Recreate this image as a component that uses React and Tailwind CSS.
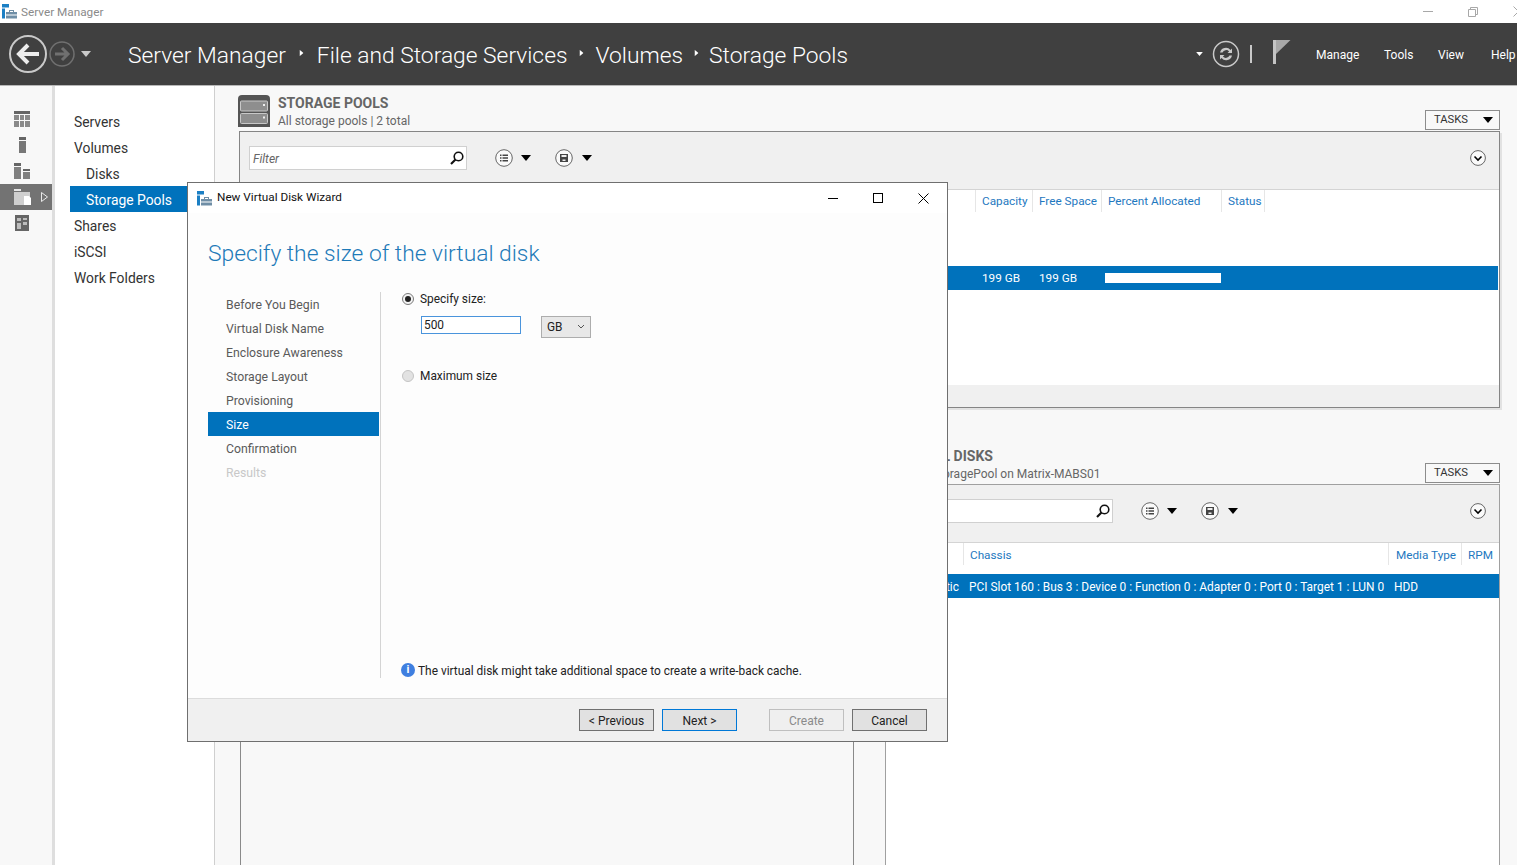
const Caret = ({ className = '', color = '#000', w = 10, h = 6 }) => (
  <svg width={w} height={h} viewBox="0 0 10 6" className={className}>
    <path d="M0 0h10L5 6z" fill={color} />
  </svg>
);

const AppIcon = () => (
  <svg width="15" height="15" viewBox="0 0 15 15" className="shrink-0">
    <rect x="0" y="0" width="7" height="3.5" fill="#1b7fc4" />
    <rect x="0" y="4.5" width="3" height="10" fill="#1b7fc4" />
    <path d="M4 8h11v6.5H4z" fill="#6f8ea6" />
    <path d="M7 8V6h5v2h-1V7H8v1z" fill="#6f8ea6" />
    <rect x="4" y="10.5" width="11" height="1" fill="#fff" />
  </svg>
);

const BackIcon = () => (
  <svg width="40" height="40" viewBox="0 0 40 40" className="shrink-0">
    <circle cx="20" cy="20" r="18" fill="none" stroke="#c9c9c9" strokeWidth="2" />
    <path d="M31 20H12M20 11l-9 9 9 9" fill="none" stroke="#ececec" strokeWidth="4" />
  </svg>
);

const ForwardIcon = () => (
  <svg width="26" height="26" viewBox="0 0 26 26" className="shrink-0">
    <circle cx="13" cy="13" r="12" fill="none" stroke="#707070" strokeWidth="1.5" />
    <path d="M6 13h13M13 7l6 6-6 6" fill="none" stroke="#707070" strokeWidth="3" />
  </svg>
);

const RefreshIcon = () => (
  <svg width="28" height="28" viewBox="0 0 28 28" className="shrink-0">
    <circle cx="14" cy="14" r="12.5" fill="none" stroke="#c9c9c9" strokeWidth="1.5" />
    <path d="M8 12.5a6 6 0 0 1 10.5-2.5l1.5-1.5V13h-4.5l1.6-1.6a4 4 0 0 0-6.6 1.1z" fill="#c9c9c9" />
    <path d="M20 15.5a6 6 0 0 1-10.5 2.5L8 19.500V15h4.500l-1.600 1.600a4 4 0 0 0 6.600-1.100z" fill="#c9c9c9" />
  </svg>
);

const FlagIcon = () => (
  <svg width="18" height="24" viewBox="0 0 18 24" className="shrink-0">
    <rect x="0" y="0" width="3" height="24" fill="#c4c4c4" />
    <path d="M3 0h14.500L3 14z" fill="#a8a8a8" />
  </svg>
);

const StorageIcon = () => (
  <svg width="32" height="32" viewBox="0 0 32 32" className="shrink-0 -ml-px">
    <path d="M4 0h24a4 4 0 0 1 4 4v28H0V4a4 4 0 0 1 4-4z" fill="#555" />
    <rect x="2.500" y="6" width="27" height="10" rx="1" fill="#8e8e8e" stroke="#c8c8c8" />
    <rect x="2.500" y="18.500" width="27" height="10" rx="1" fill="#8e8e8e" stroke="#c8c8c8" />
    <rect x="25" y="9" width="2" height="2" fill="#eee" />
    <rect x="25" y="21.500" width="2" height="2" fill="#eee" />
  </svg>
);

const DashIcon = () => (
  <svg width="16" height="16" viewBox="0 0 16 16">
    <path d="M0 0h16v3H0z" fill="#666" />
    <path d="M0 4h5v5H0zM6 4h4v5H6zM11 4h5v5h-5zM0 10h5v6H0zM6 10h4v6H6zM11 10h5v6h-5z" fill="#8a8a8a" />
  </svg>
);

const LocalIcon = () => (
  <svg width="16" height="16" viewBox="0 0 16 16">
    <path d="M5 0h7v3H5z" fill="#666" />
    <path d="M5 4h7v12H5z" fill="#777" />
  </svg>
);

const AllIcon = () => (
  <svg width="16" height="16" viewBox="0 0 16 16">
    <path d="M0 0h7v3H0zM9 6h7v2H9z" fill="#666" />
    <path d="M0 4h7v12H0zM9 9h7v7H9z" fill="#808080" />
  </svg>
);

const FilesIcon = () => (
  <svg width="18" height="16" viewBox="0 0 18 16">
    <path d="M0 0h7v2H0z" fill="#e6e6e6" />
    <path d="M0 3h16v13H0z" fill="#cfcfcf" />
    <path d="M10 7h5l2 2v7h-7z" fill="#fff" />
  </svg>
);

const RolesIcon = () => (
  <svg width="16" height="16" viewBox="0 0 16 16">
    <path d="M1 0h14v16H1z" fill="#666" />
    <path d="M3 3h4v3H3zM9 3h4v2H9zM3 8h4v6H3zM9 7h4v3H9z" fill="#bdbdbd" />
  </svg>
);

const SearchIcon = () => (
  <svg width="14" height="14" viewBox="0 0 14 14">
    <circle cx="8.500" cy="5.500" r="4.300" fill="none" stroke="#111" strokeWidth="1.600" />
    <path d="M5.500 8.500L1 13" stroke="#111" strokeWidth="2.200" />
  </svg>
);

const ListCircle = () => (
  <svg width="18" height="18" viewBox="0 0 18 18">
    <circle cx="9" cy="9" r="8.300" fill="#fafafa" stroke="#666" />
    <path d="M5 5.500h1.500V7H5zM5 8.300h1.500v1.500H5zM5 11h1.500v1.500H5zM7.500 5.500H13V7H7.500zM7.500 8.300H13v1.500H7.500zM7.500 11H13v1.500H7.500z" fill="#444" />
  </svg>
);

const SaveCircle = () => (
  <svg width="18" height="18" viewBox="0 0 18 18">
    <circle cx="9" cy="9" r="8.300" fill="#fafafa" stroke="#666" />
    <path d="M5 5h8v8H5z" fill="#444" />
    <path d="M6.500 6h5v2h-5zM7.500 10.500h3V12h-3z" fill="#eee" />
  </svg>
);

const ChevronCircle = () => (
  <svg width="16" height="16" viewBox="0 0 16 16">
    <circle cx="8" cy="8" r="7.400" fill="#fafafa" stroke="#666" />
    <path d="M4.500 6.500L8 10l3.500-3.500" fill="none" stroke="#000" strokeWidth="1.600" />
  </svg>
);

const TasksButton = () => (
  <div className="h-[20px] w-[75px] border border-[#8c8c8c] flex items-center justify-between pl-2 pr-[6px] text-[11.250px] text-[#333] bg-[#f8f8f8]">
    TASKS
    <Caret />
  </div>
);

const Toolbar = ({ filterClass, gapClass }) => (
  <div className="h-[57px] pb-[6px] bg-[#f0f0f0] flex items-center shrink-0">
    <div className={`h-[24px] bg-white border border-[#d0d0d0] flex items-center justify-between pl-[3px] pr-[2px] text-[12px] italic text-[#666] ${filterClass}`}>
      <span className="pt-[2px]">Filter</span>
      <SearchIcon />
    </div>
    <div className={`flex items-center ${gapClass}`}>
      <ListCircle />
      <Caret className="ml-[8px]" />
      <div className="ml-[24px]"><SaveCircle /></div>
      <Caret className="ml-[9px]" />
    </div>
    <div className="ml-auto mr-[13px]"><ChevronCircle /></div>
  </div>
);

const navItems = [
  { label: 'Servers' },
  { label: 'Volumes' },
  { label: 'Disks', sub: true },
  { label: 'Storage Pools', sub: true, active: true },
  { label: 'Shares' },
  { label: 'iSCSI' },
  { label: 'Work Folders' },
];

const steps = ['Before You Begin', 'Virtual Disk Name', 'Enclosure Awareness', 'Storage Layout', 'Provisioning', 'Size', 'Confirmation', 'Results'];

const Wizard = () => (
  <div className="absolute left-[187px] top-[182px] w-[761px] h-[560px] bg-white border border-[#6f6f6f] flex flex-col">
    <div className="h-[30px] flex items-center pl-[9px] shrink-0 text-[11.750px] text-[#111]">
      <AppIcon />
      <span className="ml-[5px]">New Virtual Disk Wizard</span>
      <div className="ml-auto flex items-center">
        <div className="w-[10px] h-px bg-black mr-[35px]"></div>
        <div className="w-[10px] h-[10px] border border-black mr-[35px]"></div>
        <svg width="11" height="11" viewBox="0 0 11 11" className="mr-[18px]">
          <path d="M.5.500l10 10M10.500.500l-10 10" stroke="#000" />
        </svg>
      </div>
    </div>
    <div className="h-[79px] pt-[25px] pl-[20px] shrink-0 bg-[#fdfdfd]">
      <h1 className="text-[22.800px] leading-[32px] font-light text-[#1e7ab8]">Specify the size of the virtual disk</h1>
    </div>
    <div className="h-[386px] flex shrink-0 bg-[#fdfdfd]">
      <div className="w-[171px] ml-[20px] shrink-0">
        {steps.map((s) => (
          <div
            key={s}
            className={`h-[24px] pt-[2px] flex items-center pl-[18px] text-[12.250px] ${
              s === 'Size' ? 'bg-[#0072bc] text-white' : s === 'Results' ? 'text-[#c8c8c8]' : 'text-[#5a5a5a]'
            }`}
          >
            {s}
          </div>
        ))}
      </div>
      <div className="ml-px border-l border-[#d4d4d4] flex-1 pl-[21px] flex flex-col text-[11.900px] text-[#222]">
        <div className="flex items-center h-[13px]">
          <span className="w-[12px] h-[12px] rounded-full border border-[#7a7a7a] bg-[#f4f4f4] flex items-center justify-center">
            <span className="w-[6px] h-[6px] rounded-full bg-[#222]"></span>
          </span>
          <span className="ml-[6px] pt-[2px]">Specify size:</span>
        </div>
        <div className="flex items-start ml-[19px] mt-[11px]">
          <div className="w-[100px] h-[18px] pt-[2px] border border-[#4a94dc] bg-white pl-[2px] flex items-center">500</div>
          <div className="ml-[20px] w-[50px] h-[22px] pt-[2px] border border-[#adadad] bg-[#e8e8e8] flex items-center justify-between pl-[5px] pr-[5px]">
            GB
            <svg width="8" height="5" viewBox="0 0 8 5" className="mb-[3px]">
              <path d="M1 1l3 3 3-3" fill="none" stroke="#555" />
            </svg>
          </div>
        </div>
        <div className="flex items-center h-[13px] mt-[31px]">
          <span className="w-[12px] h-[12px] rounded-full border border-[#c4c4c4] bg-[#e2e2e2]"></span>
          <span className="ml-[6px] pt-[2px]">Maximum size</span>
        </div>
        <div className="mt-auto h-[16px] flex items-center">
          <span className="w-[14px] h-[14px] -ml-px rounded-full bg-[#3f7fe0] text-white text-[11px] font-bold flex items-center justify-center mr-[3px]">i</span>
          <span className="pt-[4px]">The virtual disk might take additional space to create a write-back cache.</span>
        </div>
      </div>
    </div>
    <div className="h-[20px] shrink-0 bg-[#fdfdfd]"></div>
    <div className="flex-1 bg-[#f0f0f0] border-t border-[#dcdcdc] flex items-center justify-end pr-[20px] text-[12px] text-[#222]">
      <button className="w-[75px] h-[22px] pt-px bg-[#e1e1e1] border border-[#707070]">&lt; Previous</button>
      <button className="w-[75px] h-[22px] pt-px ml-[8px] bg-[#e1e1e1] border border-[#0078d7]">Next &gt;</button>
      <button className="w-[75px] h-[22px] pt-px ml-[32px] bg-[#efefef] border border-[#bfbfbf] text-[#8a8a8a]">Create</button>
      <button className="w-[75px] h-[22px] pt-px ml-[8px] bg-[#e1e1e1] border border-[#707070]">Cancel</button>
    </div>
  </div>
);

export default function App() {
  return (
    <div className="relative w-[1517px] h-[865px] overflow-hidden bg-white font-['Roboto',sans-serif]">
      {/* window title */}
      <div className="h-[23px] flex items-center text-[11.750px] text-[#8a8a8a]">
        <div className="ml-[2px]"><AppIcon /></div>
        <span className="ml-[4px] pt-[2px]">Server Manager</span>
        <div className="ml-auto flex items-center">
          <div className="w-[10px] h-px bg-[#a8a8a8] mr-[35px]"></div>
          <svg width="10" height="10" viewBox="0 0 10 10" className="mr-[35px]">
            <path d="M.5 2.500h7v7h-7zM2.500 2.500v-2h7v7h-2" fill="none" stroke="#a8a8a8" />
          </svg>
          <svg width="11" height="11" viewBox="0 0 11 11" className="mr-[-7px]">
            <path d="M.5.500l10 10M10.500.500l-10 10" stroke="#a8a8a8" />
          </svg>
        </div>
      </div>

      {/* nav bar */}
      <div className="h-[62px] bg-[#404040] flex items-center text-white overflow-hidden">
        <div className="ml-[8px]"><BackIcon /></div>
        <div className="ml-px"><ForwardIcon /></div>
        <Caret className="ml-[6px]" color="#c9c9c9" />
        <div className="ml-[37px] pt-[4px] flex items-center text-[22.800px] font-light whitespace-nowrap">
          Server Manager
          <Caret className="ml-[12px] mr-[12px] -rotate-90 mb-[6px]" color="#fff" w={7} h={4} />
          File and Storage Services
          <Caret className="mx-[10.500px] -rotate-90 mb-[6px]" color="#fff" w={7} h={4} />
          Volumes
          <Caret className="mx-[9.500px] -rotate-90 mb-[6px]" color="#fff" w={7} h={4} />
          Storage Pools
        </div>
        <div className="ml-auto flex items-center text-[12px] whitespace-nowrap">
          <Caret color="#fff" w={7} h={4} />
          <div className="ml-[9px]"><RefreshIcon /></div>
          <div className="ml-[10px] w-[2px] h-[18px] bg-[#c9c9c9]"></div>
          <div className="ml-[21px] mb-[4px]"><FlagIcon /></div>
          <span className="ml-[25px] w-[43px] pt-[2px]">Manage</span>
          <span className="ml-[25px] w-[28px] pt-[2px]">Tools</span>
          <span className="ml-[26px] w-[26px] pt-[2px]">View</span>
          <span className="ml-[27px] w-[26px] pt-[2px]">Help</span>
        </div>
      </div>

      <div className="flex h-[780px] border-t border-[#b8b8b8]">
        {/* icon rail */}
        <div className="w-[55px] shrink-0 bg-[#f8f8f8] border-r-[3px] border-[#dedede] pt-[20px]">
          <div className="h-[26px] flex items-center pl-[14px]"><DashIcon /></div>
          <div className="h-[26px] flex items-center pl-[14px]"><LocalIcon /></div>
          <div className="h-[26px] flex items-center pl-[14px]"><AllIcon /></div>
          <div className="h-[26px] flex items-center pl-[14px] bg-[#737373]">
            <FilesIcon />
            <svg width="7" height="10" viewBox="0 0 7 10" className="ml-[9px]">
              <path d="M.5.500l6 4.500-6 4.500z" fill="none" stroke="#e8e8e8" />
            </svg>
          </div>
          <div className="h-[26px] flex items-center pl-[14px]"><RolesIcon /></div>
        </div>

        {/* section nav */}
        <div className="w-[160px] shrink-0 bg-white border-r border-[#cfcfcf] pt-[22px] pl-[15px] text-[13.850px] text-[#333]">
          {navItems.map((item) => (
            <div
              key={item.label}
              className={`h-[26px] pt-[2px] flex items-center ${item.sub ? 'pl-[16px]' : 'pl-[4px]'} ${item.active ? 'bg-[#0072bc] text-white' : ''}`}
            >
              {item.label}
            </div>
          ))}
        </div>

        {/* content */}
        <div className="flex-1 bg-[#f8f8f8] pl-[24px] pr-[17px] pt-[9px] flex flex-col">
          <div className="h-[36px] flex shrink-0">
            <StorageIcon />
            <div className="ml-[8px] text-[#666]">
              <div className="text-[14px] font-bold leading-[16px]">STORAGE POOLS</div>
              <div className="text-[12px] leading-[16px] mt-[2px]">All storage pools | 2 total</div>
            </div>
            <div className="ml-auto mt-[15px]"><TasksButton /></div>
          </div>

          <div className="h-[277px] shrink-0 border border-[#858585] shadow-[2px_2px_0_#e2e2e2] flex flex-col">
            <Toolbar filterClass="w-[218px] ml-[9px]" gapClass="ml-[28px]" />
            <div className="flex-1 bg-white border-t border-[#d4d4d4] text-[11.750px]">
              <div className="grid grid-cols-[735px_57px_69px_120px_44px_1fr] h-[22px] text-[#1e78c0]">
                <div></div>
                <div className="border-l border-[#e6e6e6] pl-[6px] pt-[3px]">Capacity</div>
                <div className="border-l border-[#e6e6e6] pl-[6px] pt-[3px]">Free Space</div>
                <div className="border-l border-[#e6e6e6] pl-[6px] pt-[3px]">Percent Allocated</div>
                <div className="border-l border-r border-[#e6e6e6] pl-[6px] pt-[3px]">Status</div>
              </div>
              <div className="mt-[54px] mr-px h-[24px] bg-[#0072bc] text-white grid grid-cols-[735px_57px_69px_120px] items-center">
                <div></div>
                <div className="pl-[7px] pt-[2px]">199 GB</div>
                <div className="pl-[7px] pt-[2px]">199 GB</div>
                <div className="pl-[4px]">
                  <div className="w-[116px] h-[10px] bg-white"></div>
                </div>
              </div>
            </div>
            <div className="h-[22px] bg-[#f0f0f0] shrink-0"></div>
          </div>

          <div className="mt-[39px] grid grid-cols-[615px_615px] gap-x-[31px] flex-1 min-h-0">
            <div className="flex flex-col">
              <div className="h-[37px]"></div>
              <div className="flex-1 border border-b-0 border-[#8a8a8a] ml-px"></div>
            </div>
            <div className="flex flex-col min-h-0">
              <div className="h-[37px] flex text-[#666] shrink-0">
                <div>
                  <div className="text-[14px] font-bold leading-[16px] -ml-px pt-px">PHYSICAL DISKS</div>
                  <div className="text-[12px] leading-[16px] mt-[2px] ml-[47px]">StoragePool on Matrix-MABS01</div>
                </div>
                <div className="ml-auto mt-[16px]"><TasksButton /></div>
              </div>
              <div className="flex-1 border border-b-0 border-[#a0a0a0] flex flex-col">
                <Toolbar filterClass="w-[218px] ml-[9px]" gapClass="ml-[28px]" />
                <div className="flex-1 bg-white border-t border-[#d4d4d4] text-[11.750px]">
                  <div className="grid grid-cols-[77px_425px_73px_1fr] h-[22px] text-[#1e78c0]">
                    <div></div>
                    <div className="border-l border-[#e6e6e6] pl-[6px] pt-[4px]">Chassis</div>
                    <div className="border-l border-[#e6e6e6] pl-[7px] pt-[4px]">Media Type</div>
                    <div className="border-l border-[#e6e6e6] pl-[6px] pt-[4px]">RPM</div>
                  </div>
                  <div className="mt-[9px] h-[24px] bg-[#0072bc] text-white text-[11.900px] grid grid-cols-[73px_429px_1fr] items-center whitespace-nowrap">
                    <div className="text-right pt-[4px]">Automatic</div>
                    <div className="pl-[10px] pt-[4px]">PCI Slot 160 : Bus 3 : Device 0 : Function 0 : Adapter 0 : Port 0 : Target 1 : LUN 0</div>
                    <div className="pl-[6px] pt-[4px]">HDD</div>
                  </div>
                </div>
              </div>
            </div>
          </div>
        </div>
      </div>

      <Wizard />
    </div>
  );
}
